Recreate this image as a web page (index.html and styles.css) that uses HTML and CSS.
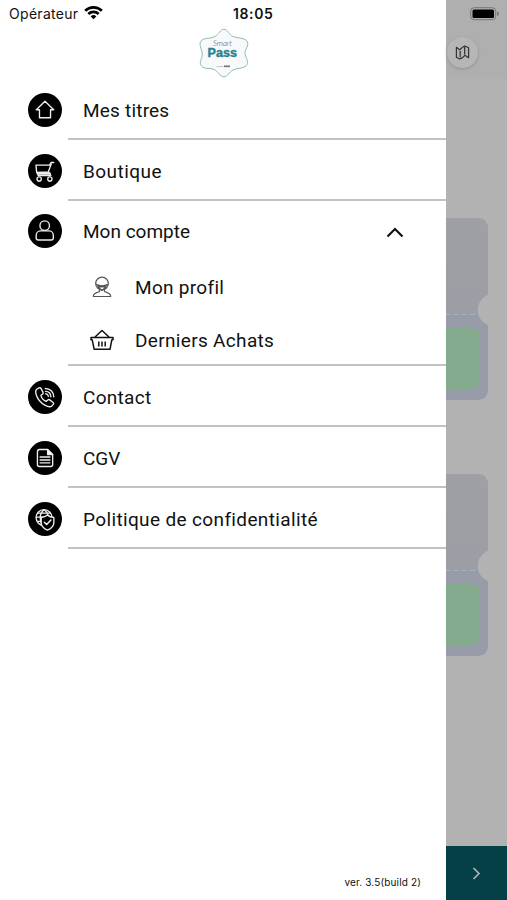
FILE: index.html
```html
<!DOCTYPE html>
<html lang="fr">
<head>
<meta charset="utf-8">
<meta name="viewport" content="width=device-width">
<title>Smart Pass</title>
<link rel="stylesheet" href="styles.css">
</head>
<body>
<div class="screen">
  <aside class="drawer">
    <header class="status">
      <span class="carrier">Opérateur</span>
      <svg class="wifi" viewBox="0 0 18 13"><path d="M9 12.5 6.3 9.8a3.9 3.9 0 0 1 5.4 0Z"/><path d="M4.1 7.5a7 7 0 0 1 9.8 0M1.1 4.4a11.2 11.2 0 0 1 15.8 0" fill="none" stroke="#000" stroke-width="2.5"/></svg>
      <time class="clock">18:05</time>
    </header>
    <svg class="logo" viewBox="0 0 52 50">
      <path d="M26 1.3C30 1.3 31 7 35 8.5S43 9.500 47 11.500C52 14 49 19 47.500 22.500C46.500 25 47 26 48 29C49.500 33 51 36 47 38.500C43 41 39 40 35 42S30 48.700 26 48.700S20 43.500 16 41.500S8 41.500 4.500 39C0.500 36 3 32 4 28.500C5 25 3.500 23 2.500 19C1.500 15 2 12.500 6 11C9 10 13 10.500 17 8.500S22 1.300 26 1.300Z" fill="#f8f9fa" stroke="#91b9bb" stroke-width="1"/>
      <text class="logo-smart" x="15" y="17.700" textLength="19" lengthAdjust="spacingAndGlyphs">Smart</text>
      <text class="logo-pass" x="9.500" y="29" textLength="29.500" lengthAdjust="spacingAndGlyphs">Pass</text>
      <path d="M18.500 38.500h7" stroke="#c4c8ca" stroke-width="1"/><path d="M26 38.300h6" stroke="#777" stroke-width="1.700"/>
    </svg>
    <nav class="menu">
      <a class="item">
        <span class="badge"><svg viewBox="0 0 35 35"><path d="M17.500 8.500 8.500 17.200h3.300v8.300h11.400v-8.300h3.300Z"/></svg></span>
        <span class="label titres">Mes titres</span>
      </a>
      <a class="item">
        <span class="badge"><svg viewBox="0 0 35 35"><path d="M26.500 8.700h-2.800l-1.400 2.800H8.200l.7 7.500 12-.6 3-8M21.200 18.400l2.300 3.700H10.500l-.8-1.700 11-1.700" /><path d="M10 20.200h12.500" stroke-width="2.200"/><circle cx="11.500" cy="25.800" r="2.200"/><circle cx="22.500" cy="25.800" r="2.200"/></svg></span>
        <span class="label boutique">Boutique</span>
      </a>
      <div class="group">
        <a class="item open">
          <span class="badge"><svg viewBox="0 0 35 35"><circle cx="17.200" cy="12" r="4.900"/><path d="M12.700 17.300h9.200c2.500 0 4.200 2.400 4.200 5.200v2c0 1.500-1 2.300-2.300 2.300H10.700c-1.400 0-2.300-.8-2.300-2.300v-2c0-2.800 1.700-5.200 4.300-5.200Z"/></svg></span>
          <span class="label compte">Mon compte</span>
          <svg class="chevron" viewBox="0 0 18 11"><path d="m1.500 9.500 7.500-7.500 7.500 7.500"/></svg>
        </a>
        <a class="subitem profile">
          <svg viewBox="0 0 24 24"><g stroke="#555" stroke-width="1.200"><circle cx="12" cy="8.500" r="6.300"/><path d="M6 9.300q6 3 12 0M7 10.500q5 2.500 10 0M8 12h8l-4 3.500ZM9.500 14v2.500c-3 1.500-6.200 1.500-6.200 5h17.400c0-3.500-3.200-3.500-6.200-5V14"/></g></svg>
          <span class="label profil">Mon profil</span>
        </a>
        <a class="subitem">
          <svg viewBox="0 0 24 24"><path d="M1 9.500h22v2.300h-1.200L20 21.300H4.200L2.200 11.800H1ZM5 9l7-6.500L19 9" stroke-width="1.500"/><path d="M8.800 13.500v5M12 13.500v5M15.200 13.500v5" stroke-width="1.500"/></svg>
          <span class="label achats">Derniers Achats</span>
        </a>
      </div>
      <a class="item">
        <span class="badge"><svg viewBox="0 0 35 35"><path d="m9 9.500 2.300-1.300c1-.5 1.700-.2 2.200.7l2 3.800c.4.800.1 1.400-.6 1.900l-1.600 1.100c.5 2.800 2.700 5.200 5.300 6.300l1.800-1.500c.7-.6 1.300-.5 2 0l3.400 2.600c.8.600.8 1.300.2 2l-1.500 1.600c-1.500 1.400-4.500.7-7.200-.9-3.600-2.100-7.300-6.200-8.700-10.200-.8-2.500-.9-5 .4-6.100Z"/><path d="M18 11.700c3.200 0 5.400 2.300 5.500 5.600M17.800 8.700c5 0 8.600 3.700 8.700 8.600M18.300 14.200c1.600.2 2.500 1.200 2.700 2.700"/></svg></span>
        <span class="label contact">Contact</span>
      </a>
      <a class="item">
        <span class="badge"><svg viewBox="0 0 35 35"><path d="M12 8.700h8.200l5.200 5.200v10.400a2 2 0 0 1-2 2H11.700a2 2 0 0 1-2-2V11a2.300 2.300 0 0 1 2.300-2.300Z"/><path d="M20.200 9v5h5Z" fill="#fff"/><path d="M12.500 16.500h10M12.500 19.500h10M12.500 22.500h10" stroke-width="1.500"/></svg></span>
        <span class="label cgv">CGV</span>
      </a>
      <a class="item">
        <span class="badge"><svg viewBox="0 0 35 35"><circle cx="16.500" cy="16" r="8.200"/><path d="M8.500 15.500h8M10 11.500h13M10 20h6M16.500 8c-5 4-5 11-1.500 16M16.500 8c2.500 1.500 3.800 3.500 4.200 6"/><path d="M20 13.500c2 1.700 4 2.300 6.600 2.400v5.400c0 3.500-2.800 6-6.600 7.700-3.800-1.700-6.400-4.200-6.400-7.700v-5.400c2.500-.1 4.500-.7 6.400-2.400Z" fill="#000"/><path d="m16.800 20.800 2.400 2.400 4.400-4.600" stroke-width="1.600"/></svg></span>
        <span class="label politique">Politique de confidentialité</span>
      </a>
    </nav>
    <footer class="version">ver. 3.5(build 2)</footer>
  </aside>
  <main class="behind">
    <div class="topbar">
      <svg class="battery" viewBox="0 0 30 14"><rect x=".7" y=".7" width="25" height="12" rx="3.500" fill="none" stroke="#777"/><rect x="2.500" y="2.500" width="21.500" height="8.500" rx="1.500"/><path d="M27 4.500c2.500.7 2.500 3.700 0 4.400Z" fill="#777"/></svg>
      <span class="map"><svg viewBox="0 0 16 16"><path d="M1.500 2.500 5 5l3-2.500L10.500 1l4 2v10.500l-4-2.500-2.500 2.500-3 1.500-3.500-2ZM5.500 6v7M10.300 2v8"/></svg></span>
    </div>
    <section class="ticket"><div class="stub"></div><div class="pass"><i></i></div></section>
    <section class="ticket"><div class="stub"></div><div class="pass"><i></i></div></section>
    <div class="next"><svg viewBox="0 0 9 13"><path d="m1.500 1 5.500 5.500-5.500 5.500"/></svg></div>
  </main>
</div>
</body>
</html>
```
FILE: styles.css
```css
* { box-sizing: border-box; }
body { margin: 0; background: #fff; color: #111; font-family: Roboto, "Liberation Sans", sans-serif; }
svg { display: block; }
.screen { display: flex; width: 507px; height: 900px; overflow: hidden; }
.drawer { width: 446px; display: flex; flex-direction: column; background: #fff; }
.status { display: flex; align-items: center; height: 28px; padding: 0 0 2px 9px; font-family: Inter, sans-serif; font-size: 14px; flex: none; }
.carrier { width: 75px; letter-spacing: .3px; }
.wifi { width: 19px; height: 14px; }
.clock { margin-left: 130px; font-weight: 600; letter-spacing: .6px; }
.logo { width: 52px; height: 50px; margin-left: 198px; flex: none; }
.logo-smart { font: italic 300 8px Lato, sans-serif; fill: #444; }
.logo-pass { font: bold 12.5px "Liberation Sans", sans-serif; fill: #288393; stroke: #288393; stroke-width: .4; }
.menu { padding-top: 1px; }
.item { display: flex; align-items: center; height: 61px; padding-left: 28px; background: linear-gradient(#c2c2c2, #c2c2c2) 68px 100% / 378px 2px no-repeat; }
.item.open { height: 60px; background: none; }
.badge { width: 34px; height: 34px; border-radius: 50%; background: #000; }
.badge svg { width: 34px; height: 34px; fill: none; stroke: #eee; stroke-width: 1.4; stroke-linejoin: round; stroke-linecap: round; }
.label { font-size: 19px; line-height: 24px; white-space: nowrap; margin-top: 2px; }
.badge + .label { margin-left: 21px; }
.titres { letter-spacing: .2px; }
.boutique { letter-spacing: .45px; }
.profil { letter-spacing: .3px; }
.achats { letter-spacing: .33px; }
.contact { letter-spacing: .3px; }
.politique { letter-spacing: .36px; }
.group { height: 165px; background: linear-gradient(#c2c2c2, #c2c2c2) 68px 100% / 378px 2px no-repeat; }
.chevron { width: 18px; height: 11px; margin: 2px 42px 0 auto; fill: none; stroke: #111; stroke-width: 2.2; }
.subitem { display: flex; align-items: center; height: 53px; padding-left: 90px; gap: 21px; }
.subitem svg { width: 24px; height: 24px; fill: none; stroke: #111; stroke-linejoin: round; }
.group .profile { height: 52px; }
.version { margin: auto 25px 11px auto; font: 10px/14px Inter, sans-serif; letter-spacing: .15px; }
.behind { width: 61px; display: flex; flex-direction: column; background: #b2b2b2; }
.topbar { height: 218px; flex: none; background: linear-gradient(#afafaf 79px, #b2b2b2 79px); }
.battery { width: 30px; height: 14px; margin: 7px 0 0 24px; }
.map { display: flex; align-items: center; justify-content: center; width: 31px; height: 31px; margin: 16px 0 0 1px; border-radius: 50%; background: #b6b6b6; box-shadow: 0 1px 3px #7778; }
.map svg { width: 15px; height: 15px; fill: none; stroke: #333; stroke-width: 1.3; stroke-linejoin: round; }
.ticket { width: 42px; height: 182px; margin-bottom: 74px; flex: none; border-radius: 0 9px 9px 0; overflow: hidden; background: #989ca8; -webkit-mask: radial-gradient(circle at 48px 92px, transparent 16px, #000 16.5px); mask: radial-gradient(circle at 48px 92px, transparent 16px, #000 16.5px); }
.stub { height: 97px; background: repeating-linear-gradient(90deg, #a6b4bc 0 5px, transparent 5px 8px) 0 100% / 32px 1.5px no-repeat, linear-gradient(#9fa0a4, #9c9ea5); }
.pass { padding-top: 13px; }
.pass i { display: block; width: 34px; height: 61px; border-radius: 0 8px 8px 0; background: #84aa8e; }
.next { display: flex; align-items: center; justify-content: center; height: 54px; margin-top: auto; flex: none; background: #053f48; }
.next svg { width: 9px; height: 13px; fill: none; stroke: #aab7ba; stroke-width: 1.7; }
```
